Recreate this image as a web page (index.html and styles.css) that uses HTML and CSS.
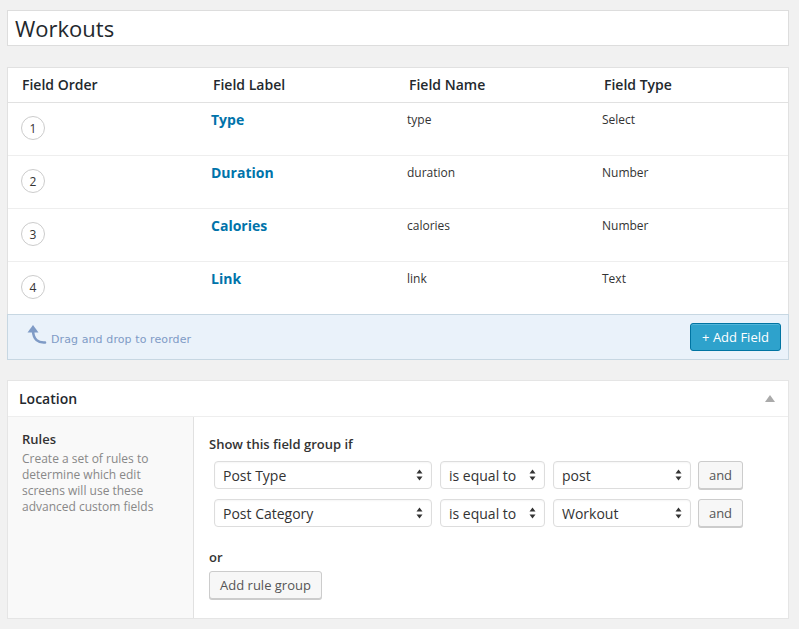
FILE: index.html
```html
<!DOCTYPE html>
<html>
<head>
<meta charset="utf-8">
<link rel="stylesheet" href="styles.css">
</head>
<body>
<div class="page">
  <div class="title-box">Workouts</div>

  <div class="fields">
    <div class="row head">
      <div class="cell">Field Order</div>
      <div class="cell">Field Label</div>
      <div class="cell">Field Name</div>
      <div class="cell">Field Type</div>
    </div>
    <div class="row item">
      <div class="cell"><span class="order">1</span></div>
      <div class="cell"><a class="label">Type</a></div>
      <div class="cell small">type</div>
      <div class="cell small">Select</div>
    </div>
    <div class="row item">
      <div class="cell"><span class="order">2</span></div>
      <div class="cell"><a class="label">Duration</a></div>
      <div class="cell small">duration</div>
      <div class="cell small">Number</div>
    </div>
    <div class="row item">
      <div class="cell"><span class="order">3</span></div>
      <div class="cell"><a class="label">Calories</a></div>
      <div class="cell small">calories</div>
      <div class="cell small">Number</div>
    </div>
    <div class="row item last">
      <div class="cell"><span class="order">4</span></div>
      <div class="cell"><a class="label">Link</a></div>
      <div class="cell small">link</div>
      <div class="cell small">Text</div>
    </div>
    <div class="footer">
      <div class="drag">
        <svg class="drag-icon" width="22" height="22" viewBox="0 0 22 22">
          <path d="M20 19.5 C13 20 8.5 16.5 8 8" fill="none" stroke="#7f9bc6" stroke-width="2.6" stroke-linecap="round"/>
          <path d="M8 2 L2.5 9.5 L13.5 9.5 Z" fill="#7f9bc6"/>
        </svg>
        <span>Drag and drop to reorder</span>
      </div>
      <button class="btn-primary">+ Add Field</button>
    </div>
  </div>

  <div class="location">
    <div class="loc-head">
      <span>Location</span>
      <span class="toggle"></span>
    </div>
    <div class="loc-body">
      <div class="loc-side">
        <div class="side-title">Rules</div>
        <p class="side-desc">Create a set of rules to determine which edit screens will use these advanced custom fields</p>
      </div>
      <div class="loc-main">
        <div class="show-if">Show this field group if</div>
        <div class="rule first">
          <div class="select w1"><span>Post Type</span><svg class="arr" width="7" height="12" viewBox="0 0 7 12"><path d="M3.5 0.5 L6.5 4.5 L0.5 4.5 Z M3.5 11.5 L6.5 7.5 L0.5 7.5 Z" fill="#333"/></svg></div>
          <div class="select w2"><span>is equal to</span><svg class="arr" width="7" height="12" viewBox="0 0 7 12"><path d="M3.5 0.5 L6.5 4.5 L0.5 4.5 Z M3.5 11.5 L6.5 7.5 L0.5 7.5 Z" fill="#333"/></svg></div>
          <div class="select w3"><span>post</span><svg class="arr" width="7" height="12" viewBox="0 0 7 12"><path d="M3.5 0.5 L6.5 4.5 L0.5 4.5 Z M3.5 11.5 L6.5 7.5 L0.5 7.5 Z" fill="#333"/></svg></div>
          <button class="btn and">and</button>
        </div>
        <div class="rule">
          <div class="select w1"><span>Post Category</span><svg class="arr" width="7" height="12" viewBox="0 0 7 12"><path d="M3.5 0.5 L6.5 4.5 L0.5 4.5 Z M3.5 11.5 L6.5 7.5 L0.5 7.5 Z" fill="#333"/></svg></div>
          <div class="select w2"><span>is equal to</span><svg class="arr" width="7" height="12" viewBox="0 0 7 12"><path d="M3.5 0.5 L6.5 4.5 L0.5 4.5 Z M3.5 11.5 L6.5 7.5 L0.5 7.5 Z" fill="#333"/></svg></div>
          <div class="select w3"><span>Workout</span><svg class="arr" width="7" height="12" viewBox="0 0 7 12"><path d="M3.5 0.5 L6.5 4.5 L0.5 4.5 Z M3.5 11.5 L6.5 7.5 L0.5 7.5 Z" fill="#333"/></svg></div>
          <button class="btn and">and</button>
        </div>
        <div class="or">or</div>
        <button class="btn add-group">Add rule group</button>
      </div>
    </div>
  </div>
</div>
</body>
</html>
```

FILE: styles.css
```css
* { box-sizing: border-box; }
html, body {
  margin: 0;
  background: #f1f1f1;
  font-family: "Open Sans", "Liberation Sans", sans-serif;
  color: #333;
}
.page {
  padding: 10px 10px 0 7px;
  width: 799px;
}
.title-box {
  width: 782px;
  height: 36px;
  background: #fff;
  border: 1px solid #ddd;
  font-size: 22px;
  line-height: 34px;
  padding-left: 7px;
  color: #23282d;
}
.fields {
  margin-top: 21px;
  width: 782px;
  background: #fff;
  border: 1px solid #e1e1e1;
  border-bottom: none;
}
.row {
  display: grid;
  grid-template-columns: 191px 196px 195px 1fr;
}
.row .cell { padding-left: 14px; }
.item .cell + .cell { padding-left: 12px; }
.head {
  height: 35px;
  border-bottom: 1px solid #e1e1e1;
  font-size: 14px;
  font-weight: 600;
  line-height: 34px;
  color: #23282d;
}
.item {
  height: 53px;
  border-bottom: 1px solid #eee;
}
.item.last { border-bottom: none; height: 52px; }
.order {
  display: flex;
  align-items: center;
  justify-content: center;
  width: 24px;
  height: 24px;
  margin-top: 13px;
  margin-left: -1px;
  border: 1px solid #ccc;
  border-radius: 50%;
  font-size: 12px;
  color: #333;
}
.label {
  display: block;
  margin-top: 7px;
  font-size: 14px;
  font-weight: 700;
  line-height: 20px;
  color: #0073aa;
}
.small {
  font-size: 12px;
  line-height: 20px;
  padding-top: 7px;
  color: #333;
}
.footer {
  margin: 0 -1px;
  height: 46px;
  background: #eaf2fa;
  border: 1px solid #c7d7e2;
  display: flex;
  align-items: center;
  justify-content: space-between;
  padding: 0 7px 0 17px;
}
.drag {
  display: flex;
  align-items: center;
  font-family: "DejaVu Sans", sans-serif;
  font-size: 11px;
  color: #7f9bc6;
  letter-spacing: 0.1px;
}
.drag-icon { margin-right: 4px; margin-top: -6px; }
.drag span { margin-top: 5px; }
.btn-primary {
  width: 91px;
  height: 28px;
  background: #2ea2cc;
  border: 1px solid #0074a2;
  border-radius: 3px;
  color: #fff;
  font-family: "Open Sans", sans-serif;
  font-size: 13px;
  padding: 0;
  box-shadow: inset 0 1px 0 rgba(120,200,230,.5);
}
.location {
  margin-top: 20px;
  width: 782px;
  background: #fff;
  border: 1px solid #e5e5e5;
}
.loc-head {
  height: 36px;
  border-bottom: 1px solid #eee;
  display: flex;
  align-items: center;
  justify-content: space-between;
  padding: 0 13px 0 11px;
  font-size: 14px;
  font-weight: 600;
  color: #23282d;
}
.toggle {
  width: 0; height: 0;
  border-left: 5px solid transparent;
  border-right: 5px solid transparent;
  border-bottom: 7px solid #aaa;
}
.loc-body {
  display: flex;
  height: 201px;
}
.loc-side {
  width: 186px;
  background: #f9f9f9;
  border-right: 1px solid #e1e1e1;
  padding: 13px 14px 0 14px;
}
.side-title {
  font-size: 13px;
  font-weight: 600;
  line-height: 18px;
  color: #333;
}
.side-desc {
  margin: 3px 0 0;
  font-size: 12px;
  line-height: 16px;
  color: #888;
}
.loc-main {
  flex: 1;
  padding: 18px 15px 0 15px;
}
.show-if {
  font-size: 13px;
  font-weight: 600;
  line-height: 18px;
  color: #333;
}
.rule {
  display: flex;
  align-items: center;
  margin-top: 10px;
  padding-left: 5px;
}
.rule.first { margin-top: 8px; }
.select {
  height: 28px;
  border: 1px solid #ddd;
  border-radius: 4px;
  background: #fff;
  display: flex;
  align-items: center;
  justify-content: space-between;
  padding: 0 8px 0 8px;
  font-size: 14px;
  color: #333;
  margin-right: 8px;
  box-shadow: inset 0 1px 2px rgba(0,0,0,.04);
}
.w1 { width: 218px; }
.w2 { width: 105px; }
.w3 { width: 138px; margin-right: 7px; }
.btn {
  font-family: "Open Sans", sans-serif;
  background: #f7f7f7;
  border: 1px solid #ccc;
  border-radius: 3px;
  color: #555;
  box-shadow: 0 1px 0 #ccc;
  padding: 0;
}
.and {
  width: 45px;
  height: 28px;
  font-size: 13px;
  margin-top: -1px;
}
.or {
  margin-top: 21px;
  font-size: 13px;
  font-weight: 600;
  line-height: 18px;
  color: #333;
}
.add-group {
  margin-top: 5px;
  width: 113px;
  height: 28px;
  font-size: 13px;
}
```
